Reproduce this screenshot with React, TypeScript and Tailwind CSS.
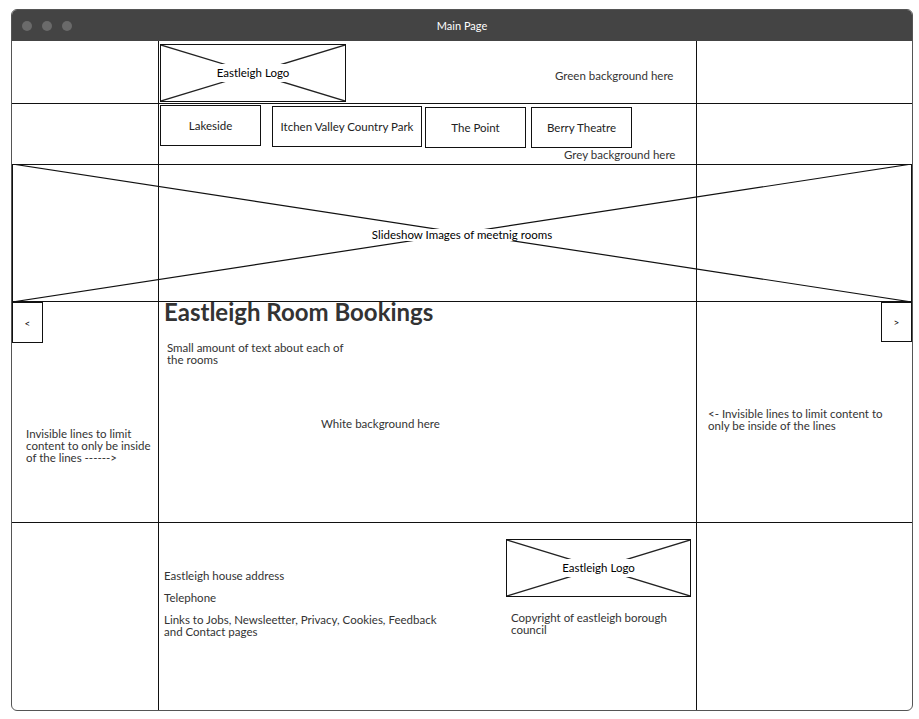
function XBox({
  label,
  className,
}: {
  label: string;
  className: string;
}) {
  return (
    <div
      className={
        "relative flex items-center justify-center border border-[#111] " +
        className
      }
    >
      <svg
        className="absolute inset-0 h-full w-full"
        viewBox="0 0 100 100"
        preserveAspectRatio="none"
      >
        <line x1="0" y1="0" x2="100" y2="100" stroke="#222" strokeWidth="1.3" vectorEffect="non-scaling-stroke" />
        <line x1="0" y1="100" x2="100" y2="0" stroke="#222" strokeWidth="1.3" vectorEffect="non-scaling-stroke" />
      </svg>
      <span className="relative bg-white px-[2px] py-[3px] text-[11.5px] leading-[12px] text-black">
        {label}
      </span>
    </div>
  );
}

function NavButton({ label, className }: { label: string; className: string }) {
  return (
    <div
      className={
        "flex h-[41px] items-center justify-center border border-[#111] text-[11.5px] leading-[12px] text-[#222] " +
        className
      }
    >
      {label}
    </div>
  );
}

function ArrowButton({ label, className }: { label: string; className: string }) {
  return (
    <div
      className={
        "flex w-[31px] items-center justify-center border border-[#111] text-[10px] leading-[10px] text-black " +
        className
      }
    >
      {label}
    </div>
  );
}

export default function App() {
  return (
    <div className="min-h-[719px] w-[919px] bg-white pl-[11px] pt-[9px] font-['Lato',sans-serif] text-[#333]">
      <div className="w-[902px] overflow-hidden rounded-[6px] border border-[#555] bg-white">
        {/* Title bar */}
        <div className="grid h-[31px] grid-cols-[1fr_auto_1fr] items-center bg-[#444]">
          <div className="flex gap-[10px] pl-[10px] pt-[1px]">
            <span className="h-[10px] w-[10px] rounded-full bg-[#6a6a6a]" />
            <span className="h-[10px] w-[10px] rounded-full bg-[#6a6a6a]" />
            <span className="h-[10px] w-[10px] rounded-full bg-[#6a6a6a]" />
          </div>
          <span className="text-[11px] leading-[12px] text-white">Main Page</span>
          <div />
        </div>

        {/* Header row */}
        <div className="grid h-[62px] grid-cols-[146px_539px_1fr]">
          <div />
          <div className="flex border-x border-[#111]">
            <XBox label="Eastleigh Logo" className="ml-px mt-[3px] h-[58px] w-[186px]" />
            <span className="ml-[209px] mt-[29px] text-[11.5px] leading-[12px]">
              Green background here
            </span>
          </div>
          <div />
        </div>

        {/* Nav row */}
        <div className="grid h-[61px] grid-cols-[146px_539px_1fr] border-t border-[#111]">
          <div />
          <div className="flex flex-col border-x border-[#111]">
            <div className="flex items-start">
              <NavButton label="Lakeside" className="ml-px mt-px w-[101px]" />
              <NavButton label="Itchen Valley Country Park" className="ml-[11px] mt-[2px] w-[150px]" />
              <NavButton label="The Point" className="ml-[3px] mt-[3px] w-[101px]" />
              <NavButton label="Berry Theatre" className="ml-[5px] mt-[3px] w-[101px]" />
            </div>
            <span className="ml-[405px] mt-px text-[11.5px] leading-[12px]">
              Grey background here
            </span>
          </div>
          <div />
        </div>

        {/* Slideshow row */}
        <div className="relative grid h-[137px] grid-cols-[146px_539px_1fr] border-t border-[#111]">
          <div />
          <div className="border-x border-[#111]" />
          <div />
          <svg
            className="absolute -top-px left-0 h-[138px] w-full"
            viewBox="0 0 900 138"
            preserveAspectRatio="none"
          >
            <line x1="0" y1="0" x2="900" y2="138" stroke="#111" strokeWidth="1.2" vectorEffect="non-scaling-stroke" />
            <line x1="0" y1="138" x2="900" y2="0" stroke="#111" strokeWidth="1.2" vectorEffect="non-scaling-stroke" />
            <line x1="0.5" y1="0" x2="0.5" y2="138" stroke="#111" strokeWidth="1" vectorEffect="non-scaling-stroke" />
            <line x1="899.5" y1="0" x2="899.5" y2="138" stroke="#111" strokeWidth="1" vectorEffect="non-scaling-stroke" />
          </svg>
          <div className="absolute inset-0 flex items-center justify-center pt-[3px]">
            <span className="bg-white text-[11.5px] leading-[12px] text-black">
              Slideshow Images of meetnig rooms
            </span>
          </div>
        </div>

        {/* Content row */}
        <div className="grid h-[221px] grid-cols-[146px_539px_1fr] border-t border-[#111]">
          <div className="flex flex-col items-start">
            <ArrowButton label="<" className="h-[41px]" />
            <p className="mt-[85px] pl-[14px] text-[11.5px] leading-[12px]">
              Invisible lines to limit
              <br />
              content to only be inside
              <br />
              of the lines ------&gt;
            </p>
          </div>
          <div className="flex flex-col border-x border-[#111]">
            <h1 className="-mt-[2px] pl-[5px] text-[24px] font-bold leading-[24px] text-[#333]">
              Eastleigh Room Bookings
            </h1>
            <p className="mt-[18px] pl-[8px] text-[11.5px] leading-[12px]">
              Small amount of text about each of
              <br />
              the rooms
            </p>
            <p className="mt-[52px] pl-[162px] text-[11.5px] leading-[12px]">
              White background here
            </p>
          </div>
          <div className="flex flex-col items-end">
            <ArrowButton label=">" className="h-[40px]" />
            <p className="mt-[66px] self-start pl-[11px] text-[11.5px] leading-[12px]">
              &lt;- Invisible lines to limit content to
              <br />
              only be inside of the lines
            </p>
          </div>
        </div>

        {/* Footer row */}
        <div className="grid h-[188px] grid-cols-[146px_539px_1fr] border-t border-[#111]">
          <div />
          <div className="flex border-x border-[#111]">
            <div className="flex w-[347px] flex-col gap-[10px] pl-[5px] pt-[47px] text-[11.5px] leading-[12px]">
              <p>Eastleigh house address</p>
              <p>Telephone</p>
              <p>
                Links to Jobs, Newsleetter, Privacy, Cookies, Feedback
                <br />
                and Contact pages
              </p>
            </div>
            <div className="flex flex-col pt-[16px]">
              <XBox label="Eastleigh Logo" className="h-[58px] w-[185px]" />
              <p className="ml-[5px] mt-[15px] text-[11.5px] leading-[12px]">
                Copyright of eastleigh borough
                <br />
                council
              </p>
            </div>
          </div>
          <div />
        </div>
      </div>
    </div>
  );
}
